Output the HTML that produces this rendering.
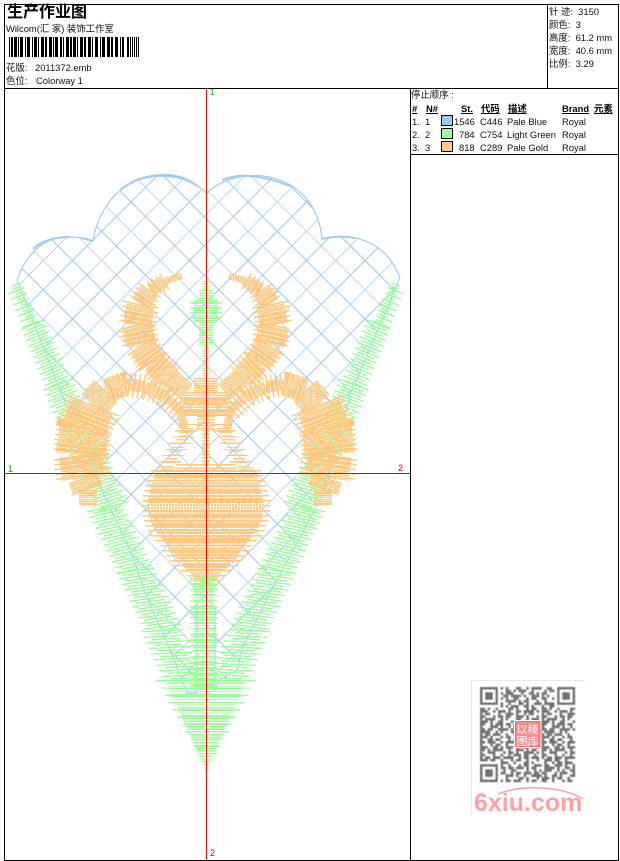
<!DOCTYPE html>
<html><head><meta charset="utf-8"><style>
html,body{margin:0;padding:0;background:#fff;overflow:hidden}
#p{position:relative;width:620px;height:861px;overflow:hidden;background:#fff;font:9.4px/12px "Liberation Sans","WenQuanYi Zen Hei",sans-serif;color:#111}
.t{position:absolute;white-space:pre}
.k{font-family:"Liberation Sans","WenQuanYi Zen Hei","Noto Sans CJK SC",sans-serif}
.b{font-weight:bold;text-decoration:underline;color:#000}
.l{position:absolute;background:#000}
.s{position:absolute;left:441px;width:10px;height:9px;border:1px solid #000}
svg{position:absolute;left:0;top:0}
.o path{fill:none;stroke:#ffc880}
.g path{fill:none;stroke:#99ff99}
</style></head><body><div id="p">
<svg width="620" height="861" viewBox="0 0 620 861">
<defs>
<clipPath id="heart"><path d="M17 280C25 255 45 236 68 237C78 237 86 238 93 241C96 220 108 198 125 187C145 173 180 170 207 193C225 175 262 168 292 186C310 198 320 215 322 239C340 235 360 235 378 248C390 256 396 268 400 278L350 395L325 490L270 593L243 647L237 670L215 690V605H197V693H187L177 667L163 633L148 600L130 550L103 493L60 390Z"/></clipPath>
<clipPath id="pear"><path d="M156 470L150 490L147 505L150 520L156 532L163 540L171 550L178 560L187 570L197 580L206 584L215 580L225 570L234 560L241 550L249 540L256 532L262 520L264 505L261 490L256 470Z"/></clipPath>
<clipPath id="pear2"><path d="M151 470L144 490L141 505L144 522L150 536L160 545L166 556L174 566L184 574L206 590L228 574L238 566L246 556L252 545L262 536L268 522L271 505L268 490L261 470Z"/></clipPath>
<clipPath id="tip"><path d="M165 680H247L206 771Z"/></clipPath>
<clipPath id="tip2"><path d="M156 680H256L208 771Z"/></clipPath>
<filter id="soft" x="-5%" y="-5%" width="110%" height="110%"><feGaussianBlur stdDeviation="0.5"/></filter>
</defs>

<!-- lattice -->
<g clip-path="url(#heart)"><path shape-rendering="crispEdges" fill="none" stroke="#9fcbf0" stroke-width="1" d="M0 274.5L274.5 0M0 303.75L303.75 0M0 333L333 0M0 362.25L362.25 0M0 391.5L391.5 0M0 420.75L420 .75M0 450L420 30M0 479.25L420 59.25M0 508.5L420 88.5M0 537.75L420 117.75M0 567L420 147M0 596.25L420 176.25M0 625.5L420 205.5M0 654.75L420 234.75M0 684L420 264M0 713.25L420 293.25M0 742.5L420 322.5M0 771.75L420 351.75M21 780L420 381M50.25 780L420 410.25M79.5 780L420 439.5M108.75 780L420 468.75M138 780L420 498M167.25 780L420 527.25M196.5 780L420 556.5
M133.75 0L420 286.25M104.5 0L420 315.5M75.25 0L420 344.75M46 0L420 374M16.75 0L420 403.25M0 12.5L420 432.5M0 41.75L420 461.75M0 71L420 491M0 100.25L420 520.25M0 129.5L420 549.5M0 158.75L420 578.75M0 188L420 608M0 217.25L420 637.25M0 246.5L420 666.5M0 275.75L420 695.75M0 305L420 725M0 334.25L420 754.25M0 363.5L416.5 780M0 392.75L387.25 780M0 422L358 780M0 451.25L328.75 780M0 480.5L299.5 780M0 509.75L270.25 780M0 539L241 780M0 568.25L211.75 780"/></g>

<!-- blue outlines -->
<g fill="none" stroke="#9fcbf0" stroke-width="1.2">
<path d="M17 280C25 255 45 236 68 237C78 237 86 238 93 241C96 220 108 198 125 187C145 173 180 170 207 193C225 175 262 168 292 186C310 198 320 215 322 239C340 235 360 235 378 248C390 256 396 268 400 278"/>
<path stroke-width="2" d="M33 249C45 238 60 237 70 237M93 241L82 238M120 190C135 178 150 175 165 175C175 175 188 178 197 186M222 180C240 172 265 176 290 186M322 239C335 236 345 236 355 238"/>
<path stroke-width="1" d="M17 280L60 390L103 493L130 550L148 600L163 633L177 667L187 693H196M197 605V693M215 607V685M400 278L350 395L325 490L270 593L243 647L237 670L220 680L215 690"/>
<path stroke-width="1" d="M157 517C162 535 170 552 178 563M255 520C250 535 240 552 232 563M70 420C75 402 90 390 110 388M340 420C335 402 320 390 300 388"/>
</g>

<!-- green stitches -->
<g id="arm" class="g" shape-rendering="crispEdges">
<path stroke-width="8" stroke-dasharray="1.3 1.5" transform="matrix(1 -.42 .42 1 16 284)" d="M0 0V40"/>
<path stroke-width="16" stroke-dasharray="1.3 4.3" transform="matrix(1 -.42 .42 1 16 290)" d="M0 0V35"/>
<path stroke-width="16" stroke-dasharray="1.3 1.5" transform="matrix(1 -.42 .42 1 33 324)" d="M0 0V60"/>
<path stroke-width="24" stroke-dasharray="1.3 4.3" transform="matrix(1 -.42 .42 1 33 324)" d="M0 0V60"/>
<path stroke-width="21" stroke-dasharray="1.3 1.5" transform="matrix(1 -.38 .42 1 58 384)" d="M0 0V60"/>
<path stroke-width="30" stroke-dasharray="1.3 4.3" transform="matrix(1 -.38 .42 1 58 384)" d="M0 0V60"/>
<path stroke-width="24" stroke-dasharray="1.3 1.5" transform="matrix(1 -.32 .48 1 83 444)" d="M0 0V65"/>
<path stroke-width="32" stroke-dasharray="1.3 4.3" transform="matrix(1 -.32 .48 1 83 444)" d="M0 0V65"/>
<path stroke-width="26" stroke-dasharray="1.3 1.5" transform="matrix(1 -.24 .5 1 104 507)" d="M0 0V63"/>
<path stroke-width="35" stroke-dasharray="1.3 4.3" transform="matrix(1 -.24 .5 1 104 507)" d="M0 0V63"/>
<path stroke-width="28" stroke-dasharray="1.3 1.5" transform="matrix(1 -.14 .48 1 135 570)" d="M0 0V60"/>
<path stroke-width="38" stroke-dasharray="1.3 4.3" transform="matrix(1 -.14 .48 1 135 570)" d="M0 0V60"/>
<path stroke-width="28" stroke-dasharray="1.3 1.5" transform="matrix(1 -.05 .46 1 162 630)" d="M0 0V50"/>
<path stroke-width="42" stroke-dasharray="1.3 4.3" transform="matrix(1 -.05 .46 1 162 630)" d="M0 0V50"/>
</g>
<use href="#arm" transform="translate(412 0) scale(-1 1)"/>

<g class="g" shape-rendering="crispEdges">
<path stroke-width="6" stroke-dasharray="1.3 1.2" d="M206 281V290"/>
<path stroke-width="14" stroke-dasharray="1.3 1.2" d="M206 290V300"/>
<path stroke-width="24" stroke-dasharray="1.3 1.2" d="M206 300V322"/>
<path stroke-width="32" stroke-dasharray="1.3 3.7" d="M206 302V320"/>
<path stroke-width="14" stroke-dasharray="1.3 1.2" d="M206 322V345"/>
<path stroke-width="6" stroke-dasharray="1.3 1.2" d="M206 345V580"/>
<path stroke-width="21" stroke-dasharray="1.3 1.5" d="M204 580V690"/>
<path stroke-width="28" stroke-dasharray="1.3 4.3" d="M204 578V690"/>
<path clip-path="url(#tip)" stroke-width="100" stroke-dasharray="1.3 1.4" d="M206 680V772"/>
<path clip-path="url(#tip2)" stroke-width="110" stroke-dasharray="1.3 6" d="M206 680V772"/>
</g>

<!-- orange -->
<g id="orn" class="o" shape-rendering="crispEdges" stroke-dasharray="1.6 .6">
<path stroke-width="7" d="M182 276L165 281"/>
<path stroke-width="13" d="M165 281L150 290"/>
<path stroke-width="20" d="M150 290L141 304"/>
<path stroke-width="28" d="M141 304L137 325"/>
<path stroke-width="30" d="M137 325L141 345"/>
<path stroke-width="27" d="M141 345L153 362"/>
<path stroke-width="24" d="M153 362L170 378"/>
<path stroke-width="20" d="M170 378L187 392"/>
<path stroke-width="18" stroke-dasharray="1.4 3.4" d="M165 281L150 290"/>
<path stroke-width="27" stroke-dasharray="1.4 3.4" d="M150 290L141 304"/>
<path stroke-width="37" stroke-dasharray="1.4 3.4" d="M141 304L137 325L141 345"/>
<path stroke-width="33" stroke-dasharray="1.4 3.4" d="M141 345L153 362L170 378"/>
<!-- arch -->
<path stroke-width="9" d="M184 428L180 410L165 396"/>
<path stroke-width="12" d="M165 396L145 387L125 384"/>
<path stroke-width="24" stroke-dasharray="1.4 3.4" d="M180 410L165 396L145 387L125 384L108 389"/>
<path stroke-width="24" d="M125 384L106 391"/>
<path stroke-width="32" d="M106 391L93 405"/>
<path stroke-width="44" d="M93 405L84 428"/>
<path stroke-width="50" d="M84 428L81 455"/>
<path stroke-width="44" d="M81 455L84 478"/>
<path stroke-width="32" d="M84 478L88 490"/>
<path stroke-width="18" d="M88 490L88 505"/>
<path stroke-width="56" stroke-dasharray="1.4 3.4" d="M93 405L84 428L81 455L84 478"/>
<!-- neck: horizontal stitches -->
<path stroke-width="12" stroke-dasharray="1.2 2.6" transform="matrix(1 0 -.52 1 190 424)" d="M0 0V46"/>
<path stroke-width="22" stroke-dasharray="1.2 5" transform="matrix(1 0 -.52 1 190 424)" d="M0 0V46"/>
</g>
<use href="#orn" transform="translate(411 0) scale(-1 1)"/>

<g class="o" shape-rendering="crispEdges">
<path stroke-width="24" stroke-dasharray="1.6 .8" d="M206 378V392"/>
<path stroke-width="44" stroke-dasharray="1.6 .8" d="M206 392V416"/>
<path stroke-width="52" stroke-dasharray="1.2 3" d="M206 398V418"/>
<path stroke-width="18" stroke-dasharray="1.4 1.6" d="M206 416V430"/>
<path stroke-width="8" stroke-dasharray="1.4 2" d="M206 430V470"/>
<path stroke-width="60" stroke-dasharray="1.4 2.2" d="M206 464V470"/>
<path clip-path="url(#pear)" stroke-width="130" stroke-dasharray="2.2 .9" d="M206 470V590"/>
<path clip-path="url(#pear2)" stroke-width="140" stroke-dasharray="1.5 3.5" d="M206 470V592"/>
</g>
<path shape-rendering="crispEdges" fill="none" stroke="#fff" stroke-width="6" stroke-dasharray="1 2" d="M150 507H262"/>
<path shape-rendering="crispEdges" fill="none" stroke="#99ff99" stroke-width="14" stroke-dasharray="1.3 1.2" d="M206 575V590"/>

<!-- crosshair -->
<path shape-rendering="crispEdges" fill="none" stroke="#f00" stroke-width="1" d="M5 473.5H410M206.5 88V860"/>

<!-- barcode -->
<path shape-rendering="crispEdges" fill="none" stroke="#000" stroke-width="20" stroke-dasharray="1 1 2 1 3 1 1 1 3 2 1 1 3 2 1 1 3 1 1 2 3 1 2 2 3 1 1 1 3 2 2 1 1 2 3 1 2 1 3 1 1 2 3 1 2 2 3 1 1 2 3 2 1 1 3 2 3 1 2 2 3 2 1 1 2 3 2 1 1 1 1 1 1 1 1 1 1 1" d="M9 47H140"/>

<!-- QR -->
<rect x="471.5" y="680.5" width="114" height="134" fill="#fff"/>
<path fill="none" stroke="#e8e8e8" d="M471.5 815V680.5H586"/>
<g filter="url(#soft)"><g transform="translate(480 687) scale(2.57)" fill="none" stroke="#707070" stroke-width="1">
<path stroke-dasharray="2 1 1 2 3 1 1 3 2 2 1 1 4 2" d="M0 .5H37"/>
<path stroke-dasharray="1 2 1 1 2 3 2 1 1 1 3 2 1 4 1" d="M0 1.5H37"/>
<path stroke-dasharray="3 1 2 2 1 1 3 3 1 2 2 1 1 1 2" d="M0 2.5H37"/>
<path stroke-dasharray="1 1 1 3 2 1 2 1 4 1 1 2 3 1" d="M0 3.5H37"/>
<path stroke-dasharray="2 2 3 1 1 1 1 2 2 3 1 1 2 2" d="M0 4.5H37"/>
<path stroke-dasharray="1 3 2 1 1 2 4 1 1 1 2 3 1 2" d="M0 5.5H37"/>
<path stroke-dasharray="4 1 1 1 2 2 1 3 2 1 1 2 3 1" d="M0 6.5H37"/>
<path stroke-dasharray="1 2 3 1 2 1 1 1 3 2 2 1 1 3" d="M0 7.5H37"/>
<path stroke-dasharray="2 1 1 2 1 4 2 1 1 3 1 1 2 2" d="M0 8.5H37"/>
<path stroke-dasharray="3 2 1 1 3 1 1 2 2 1 4 1 1 1" d="M0 9.5H37"/>
<path stroke-dasharray="1 1 2 3 1 2 3 1 1 2 1 1 2 3" d="M0 10.5H37"/>
<path stroke-dasharray="2 3 1 1 2 1 2 2 3 1 1 3 1 1" d="M0 11.5H37"/>
<path stroke-dasharray="1 1 4 2 1 1 1 3 2 2 1 1 3 1" d="M0 12.5H37"/>
<path stroke-dasharray="3 1 1 2 2 3 1 1 1 2 3 1 1 2" d="M0 13.5H37"/>
<path stroke-dasharray="2 2 1 1 3 1 2 1 4 1 1 2 2 1" d="M0 14.5H37"/>
<path stroke-dasharray="1 3 3 1 1 2 1 1 2 3 2 1 1 2" d="M0 15.5H37"/>
<path stroke-dasharray="2 1 2 2 4 1 1 2 1 1 3 2 1 1" d="M0 16.5H37"/>
<path stroke-dasharray="4 2 1 1 1 3 2 1 2 1 1 3 2 1" d="M0 17.5H37"/>
<path stroke-dasharray="1 1 2 1 3 2 1 2 3 1 2 1 1 3" d="M0 18.5H37"/>
<path stroke-dasharray="3 1 1 3 1 1 2 2 1 4 1 1 2 1" d="M0 19.5H37"/>
<path stroke-dasharray="1 2 2 1 2 3 1 1 3 1 2 2 1 2" d="M0 20.5H37"/>
<path stroke-dasharray="2 1 3 2 1 1 4 1 1 2 1 3 1 1" d="M0 21.5H37"/>
<path stroke-dasharray="1 3 1 1 2 2 1 3 2 1 3 1 2 1" d="M0 22.5H37"/>
<path stroke-dasharray="3 2 2 1 1 1 3 1 1 2 2 3 1 1" d="M0 23.5H37"/>
<path stroke-dasharray="2 1 1 1 4 2 1 2 3 1 1 1 2 2" d="M0 24.5H37"/>
<path stroke-dasharray="1 2 3 3 1 1 2 1 1 2 4 1 1 1" d="M0 25.5H37"/>
<path stroke-dasharray="2 3 1 2 1 2 1 1 3 1 2 2 1 2" d="M0 26.5H37"/>
<path stroke-dasharray="1 1 2 1 3 1 4 2 1 1 2 1 3 1" d="M0 27.5H37"/>
<path stroke-dasharray="3 1 2 2 1 3 1 1 2 2 1 3 1 2" d="M0 28.5H37"/>
<path stroke-dasharray="1 2 1 1 2 1 3 2 1 3 2 1 1 4" d="M0 29.5H37"/>
<path stroke-dasharray="2 2 3 1 1 2 1 3 1 1 2 2 3 1" d="M0 30.5H37"/>
<path stroke-dasharray="4 1 1 2 2 1 2 1 3 1 1 1 2 3" d="M0 31.5H37"/>
<path stroke-dasharray="1 1 3 2 1 1 1 2 2 4 1 2 1 1" d="M0 32.5H37"/>
<path stroke-dasharray="2 3 1 1 3 2 1 1 2 1 3 1 2 1" d="M0 33.5H37"/>
<path stroke-dasharray="1 2 2 1 1 3 3 1 1 2 1 2 4 1" d="M0 34.5H37"/>
<path stroke-dasharray="3 1 1 1 2 2 1 4 2 1 1 3 1 1" d="M0 35.5H37"/>
<path stroke-dasharray="2 2 1 3 1 1 2 1 3 2 1 1 2 2" d="M0 36.5H37"/>
<g stroke="none" fill="#fff"><rect width="8" height="8"/><rect x="29" width="8" height="8"/><rect y="29" width="8" height="8"/></g>
<g stroke-width="1"><rect x=".5" y=".5" width="6" height="6"/><rect x="30.5" y=".5" width="6" height="6"/><rect x=".5" y="30.5" width="6" height="6"/></g>
<g stroke="none" fill="#707070"><rect x="2" y="2" width="3" height="3"/><rect x="32" y="2" width="3" height="3"/><rect x="2" y="32" width="3" height="3"/></g>
</g></g>
<rect x="514" y="720" width="27" height="28" fill="#fff"/>
<rect x="515.5" y="721.5" width="24.5" height="25" fill="#fb8a8d" stroke="#f66"/>
<text x="516.5" y="733" font-size="11" fill="#fff" font-family="'WenQuanYi Zen Hei','Noto Sans CJK SC',sans-serif">以</text>
<text x="527.5" y="733" font-size="11" fill="#fff" font-family="'WenQuanYi Zen Hei','Noto Sans CJK SC',sans-serif">稜</text>
<text x="516.5" y="745" font-size="11" fill="#fff" font-family="'WenQuanYi Zen Hei','Noto Sans CJK SC',sans-serif">图</text>
<text x="527.5" y="745" font-size="11" fill="#fff" font-family="'WenQuanYi Zen Hei','Noto Sans CJK SC',sans-serif">库</text>
<path fill="none" stroke="#f9a3a8" stroke-width="1.5" d="M498 794C520 785 560 785 583 799"/>
<text x="474" y="811" font-family="'Liberation Sans',sans-serif" font-weight="bold" font-size="25" fill="#f9a3a8">6xiu.com</text>
</svg>

<!-- frame -->
<div class="l" style="left:4px;top:4px;width:615px;height:1px"></div>
<div class="l" style="left:4px;top:860px;width:615px;height:1px"></div>
<div class="l" style="left:4px;top:4px;width:1px;height:857px"></div>
<div class="l" style="left:618px;top:4px;width:1px;height:857px"></div>
<div class="l" style="left:4px;top:88px;width:615px;height:1px"></div>
<div class="l" style="left:410px;top:88px;width:1px;height:773px"></div>
<div class="l" style="left:547px;top:4px;width:1px;height:85px"></div>
<div class="l" style="left:410px;top:154px;width:209px;height:1px"></div>

<!-- header -->
<div class="t k" style="left:7px;top:4px;font-size:16px;line-height:18px;font-weight:bold;color:#000">生产作业图</div>
<div class="t k" style="left:6px;top:23px">Wilcom(汇 家) 装饰工作室</div>
<div class="t k" style="left:6px;top:62px">花版:</div>
<div class="t" style="left:35px;top:62px">2011372.emb</div>
<div class="t k" style="left:6px;top:75px">色位:</div>
<div class="t" style="left:36px;top:75px">Colorway 1</div>

<div class="t k" style="left:549px;top:6px">针 迹:  3150</div>
<div class="t k" style="left:549px;top:19px">颜色:  3</div>
<div class="t k" style="left:549px;top:32px">高度:  61.2 mm</div>
<div class="t k" style="left:549px;top:45px">宽度:  40.6 mm</div>
<div class="t k" style="left:549px;top:58px">比例:  3.29</div>

<div class="t k" style="left:411px;top:89px">停止顺序 :</div>
<div class="t k b" style="left:412px;top:103px">#</div>
<div class="t k b" style="left:426px;top:103px">N#</div>
<div class="t k b" style="left:461px;top:103px">St.</div>
<div class="t k b" style="left:481px;top:103px">代码</div>
<div class="t k b" style="left:508px;top:103px">描述</div>
<div class="t k b" style="left:562px;top:103px">Brand</div>
<div class="t k b" style="left:594px;top:103px">元素</div>

<div class="t" style="left:412px;top:116px">1.  1</div>
<div class="s" style="top:115px;background:#99ccee"></div>
<div class="t" style="left:454px;top:116px">1546</div>
<div class="t" style="left:480px;top:116px">C446</div>
<div class="t" style="left:507px;top:116px">Pale Blue</div>
<div class="t" style="left:562px;top:116px">Royal</div>

<div class="t" style="left:412px;top:129px">2.  2</div>
<div class="s" style="top:128px;background:#99ff99"></div>
<div class="t" style="left:459px;top:129px">784</div>
<div class="t" style="left:480px;top:129px">C754</div>
<div class="t" style="left:507px;top:129px">Light Green</div>
<div class="t" style="left:562px;top:129px">Royal</div>

<div class="t" style="left:412px;top:142px">3.  3</div>
<div class="s" style="top:141px;background:#ffcc88"></div>
<div class="t" style="left:459px;top:142px">818</div>
<div class="t" style="left:480px;top:142px">C289</div>
<div class="t" style="left:507px;top:142px">Pale Gold</div>
<div class="t" style="left:562px;top:142px">Royal</div>

<div class="t" style="left:210px;top:88px;font-size:8px;line-height:10px;color:#0a0">1</div>
<div class="t" style="left:8px;top:464px;font-size:9px;line-height:10px;color:#0a0">1</div>
<div class="t" style="left:398px;top:463px;font-size:9px;line-height:10px;color:#c00">2</div>
<div class="t" style="left:210px;top:848px;font-size:9px;line-height:10px;color:#c00">2</div>
</div></body></html>
